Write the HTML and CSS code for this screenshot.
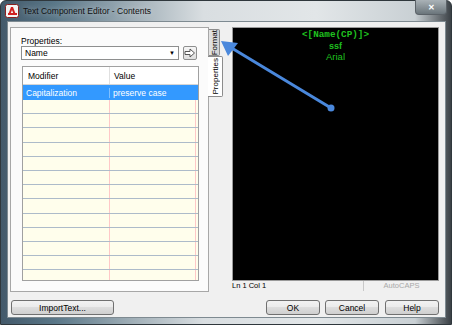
FILE: index.html
```html
<!DOCTYPE html>
<html lang="en">
<head>
  <meta charset="UTF-8">
  <title>Text Component Editor - Contents</title>
  <link rel="stylesheet" href="styles.css">
</head>
<body>

<div class="window">
  <div class="titlebar">
    <svg class="appicon" width="14" height="14" viewBox="0 0 14 14">
      <rect x="0.5" y="0.5" width="13" height="13" rx="2" fill="#f4f4f4" stroke="#8a2020"/>
      <path d="M3 11 L6 3 L8 3 L11 11 L9 11 L7 6 L5 11 Z" fill="#d22020"/>
      <rect x="3" y="9" width="9" height="2" fill="#d22020"/>
    </svg>
    <span class="title">Text Component Editor - Contents</span>
    <div class="close">&#x2715;</div>
  </div>

  <div class="client">
    <div class="main">
      <div class="panel">
        <div class="label">Properties:</div>
        <div class="pickrow">
          <div class="combo"><span>Name</span><span class="drop">&#9660;</span></div>
          <div class="pickbtn">
            <svg width="12" height="10" viewBox="0 0 12 10">
              <path d="M1 3.5 H6 V1 L10.5 5 L6 9 V6.5 H1 Z" fill="#fff" stroke="#555" stroke-width="1"/>
            </svg>
          </div>
        </div>
        <div class="grid">
          <div class="head"><div class="c1">Modifier</div><div class="c2">Value</div></div>
          <div class="row sel"><div class="c1">Capitalization</div><div class="c2">preserve case</div></div>
          <div class="row"><div class="c1"></div><div class="c2"></div></div>
          <div class="row"><div class="c1"></div><div class="c2"></div></div>
          <div class="row"><div class="c1"></div><div class="c2"></div></div>
          <div class="row"><div class="c1"></div><div class="c2"></div></div>
          <div class="row"><div class="c1"></div><div class="c2"></div></div>
          <div class="row"><div class="c1"></div><div class="c2"></div></div>
          <div class="row"><div class="c1"></div><div class="c2"></div></div>
          <div class="row"><div class="c1"></div><div class="c2"></div></div>
          <div class="row"><div class="c1"></div><div class="c2"></div></div>
          <div class="row"><div class="c1"></div><div class="c2"></div></div>
          <div class="row"><div class="c1"></div><div class="c2"></div></div>
          <div class="row"><div class="c1"></div><div class="c2"></div></div>
          <div class="row"><div class="c1"></div><div class="c2"></div></div>
        </div>
      </div>

      <div class="tabs">
        <div class="tab back"><span>Format</span></div>
        <div class="tab front"><span>Properties</span></div>
      </div>

      <div class="editor">
        <div class="screen">
          <div class="field">&lt;[Name(CP)]&gt;</div>
          <div class="glyphs">ssf</div>
          <div class="font">Arial</div>
        </div>
        <div class="status">
          <div class="pos">Ln 1 Col 1</div>
          <div class="caps">AutoCAPS</div>
        </div>
      </div>
    </div>

    <div class="buttons">
      <button class="btn import">ImportText...</button>
      <div class="spacer"></div>
      <button class="btn">OK</button>
      <button class="btn">Cancel</button>
      <button class="btn help">Help</button>
    </div>
  </div>
</div>

<!-- callout arrow drawn over the dialog -->
<svg class="callout" width="454" height="331" viewBox="0 0 454 331">
  <line x1="331" y1="108" x2="230" y2="47" stroke="#4a88dc" stroke-width="3" stroke-linecap="round"/>
  <path d="M221 41 L238 43 L228 56 Z" fill="#4a88dc"/>
  <circle cx="331" cy="108" r="3.5" fill="#4a88dc"/>
</svg>

</body>
</html>
```

FILE: styles.css
```css
body { margin:0; background:#fff; font-family:"Liberation Sans", Arial, sans-serif; font-size:8.5px; color:#000; position:relative; }

.window { width:452px; height:325px; box-sizing:border-box; border:1px solid #2f373c; border-radius:6px 6px 0 0;
  background:linear-gradient(to right, #43596a 0, #5a7788 12%, #a3b1b9 30%, #d9dee1 45%, #e2e6e8 70%, #c9d0d4 92%, #3b4146 100%);
  padding:0 5px 6px 6px; display:flex; flex-direction:column; }

.titlebar { height:20px; display:flex; align-items:center; position:relative; }
.appicon { margin:0 4px 0 -2px; }
.title { color:#111; font-size:8.5px; text-shadow:0 0 6px rgba(255,255,255,0.6); }
.close { position:absolute; right:-1px; top:-1px; width:30px; height:14px; border:1px solid #5b6268; border-top:none;
  border-radius:0 0 4px 4px; background:linear-gradient(#aab2b7, #6b757b); color:#fff; font-size:8px; font-weight:bold;
  display:flex; align-items:center; justify-content:center; }

.client { flex:1; background:#f0f0f0; border:1px solid #7e8a91; padding:5px 6px 0 2px; display:flex; flex-direction:column; }

.main { display:flex; height:265px; }

.panel { width:199px; box-sizing:border-box; border:1px solid #a7a7a7; background:#fbfbfb; padding:0 10px 0 10px; }
.label { margin-top:8px; line-height:10px; }
.pickrow { display:flex; height:14px; }
.combo { width:158px; box-sizing:border-box; border:1px solid #8e8f8f; background:#fff; display:flex; align-items:center;
  justify-content:space-between; padding:0 3px; }
.drop { font-size:6px; }
.pickbtn { width:14px; height:14px; box-sizing:border-box; margin-left:4px; border:1px solid #8e8f8f; border-radius:2px;
  background:linear-gradient(#f6f6f6, #dedede); display:flex; align-items:center; justify-content:center; }

.grid { margin-top:6px; height:215px; box-sizing:border-box; border:1px solid #a0a0a0; background:#fff; overflow:hidden; margin-left:1px; margin-right:-1px; }
.head { height:17px; display:flex; align-items:center; border-bottom:1px solid #d5d5d5; }
.head .c1 { width:87px; padding-left:5px; box-sizing:border-box; border-right:1px solid #e0e0e0; height:100%; display:flex; align-items:center; }
.head .c2 { padding-left:4px; }
.row { height:13.2px; display:flex; border-bottom:1px solid #adbbc9; background:#fffeec; }
.row .c1 { width:86px; border-right:1px solid #ffc8c8; }
.row .c2 { flex:1; border-right:1px solid #ffc8c8; margin-right:2px; }
.row.sel { height:15px; border-bottom:none; background:#3399ff; color:#fff; align-items:center; }
.row.sel .c1 { padding-left:3px; box-sizing:border-box; width:87px; border-right:1px solid #7fbfff; }
.row.sel .c2 { padding-left:3px; border-right:none; margin-right:0; }

.tabs { width:14px; display:flex; flex-direction:column; align-items:flex-start; padding-top:2px; }
.tab { box-sizing:border-box; border:1px solid #8c8c8c; border-left:none; display:flex; align-items:center; justify-content:center; font-size:8px; }
.tab span { writing-mode:vertical-rl; transform:rotate(180deg); }
.tab.back { width:11px; height:27px; background:linear-gradient(to right, #e4e4e4, #d2d2d2); border-radius:0 2px 2px 0; }
.tab.front { width:15px; height:41px; margin-left:-1px; background:#fff; border-radius:0 2px 2px 0; }

.editor { flex:1; margin-left:9px; display:flex; flex-direction:column; height:264px; }
.screen { flex:1; background:#000; border:1px solid #9a9a9a; color:#1fc01f; text-align:center; padding-top:1px; }
.field { font-family:"Liberation Mono", monospace; font-size:9.3px; font-weight:bold; line-height:12px; }
.glyphs { font-size:9px; font-weight:bold; line-height:10px; }
.font { font-size:9.5px; line-height:12px; }
.status { height:10px; display:flex; font-size:7.5px; line-height:10px; }
.pos { width:131px; border-right:1px solid #c8c8c8; }
.caps { flex:1; text-align:center; color:#a8a8a8; }

.buttons { display:flex; margin-top:8px; height:15px; padding-left:1px; }
.spacer { flex:1; }
.btn { font-family:inherit; font-size:8.5px; height:15px; width:54px; margin:0 0 0 5px; padding:0; box-sizing:border-box;
  border:1px solid #707070; border-radius:3px; background:linear-gradient(#f2f2f2 0, #ebebeb 45%, #dddddd 50%, #cfcfcf 100%); color:#000; }
.btn.import { width:103px; margin-left:0; }
.btn.help { margin-left:6px; }

.callout { position:absolute; left:0; top:0; pointer-events:none; }
```
